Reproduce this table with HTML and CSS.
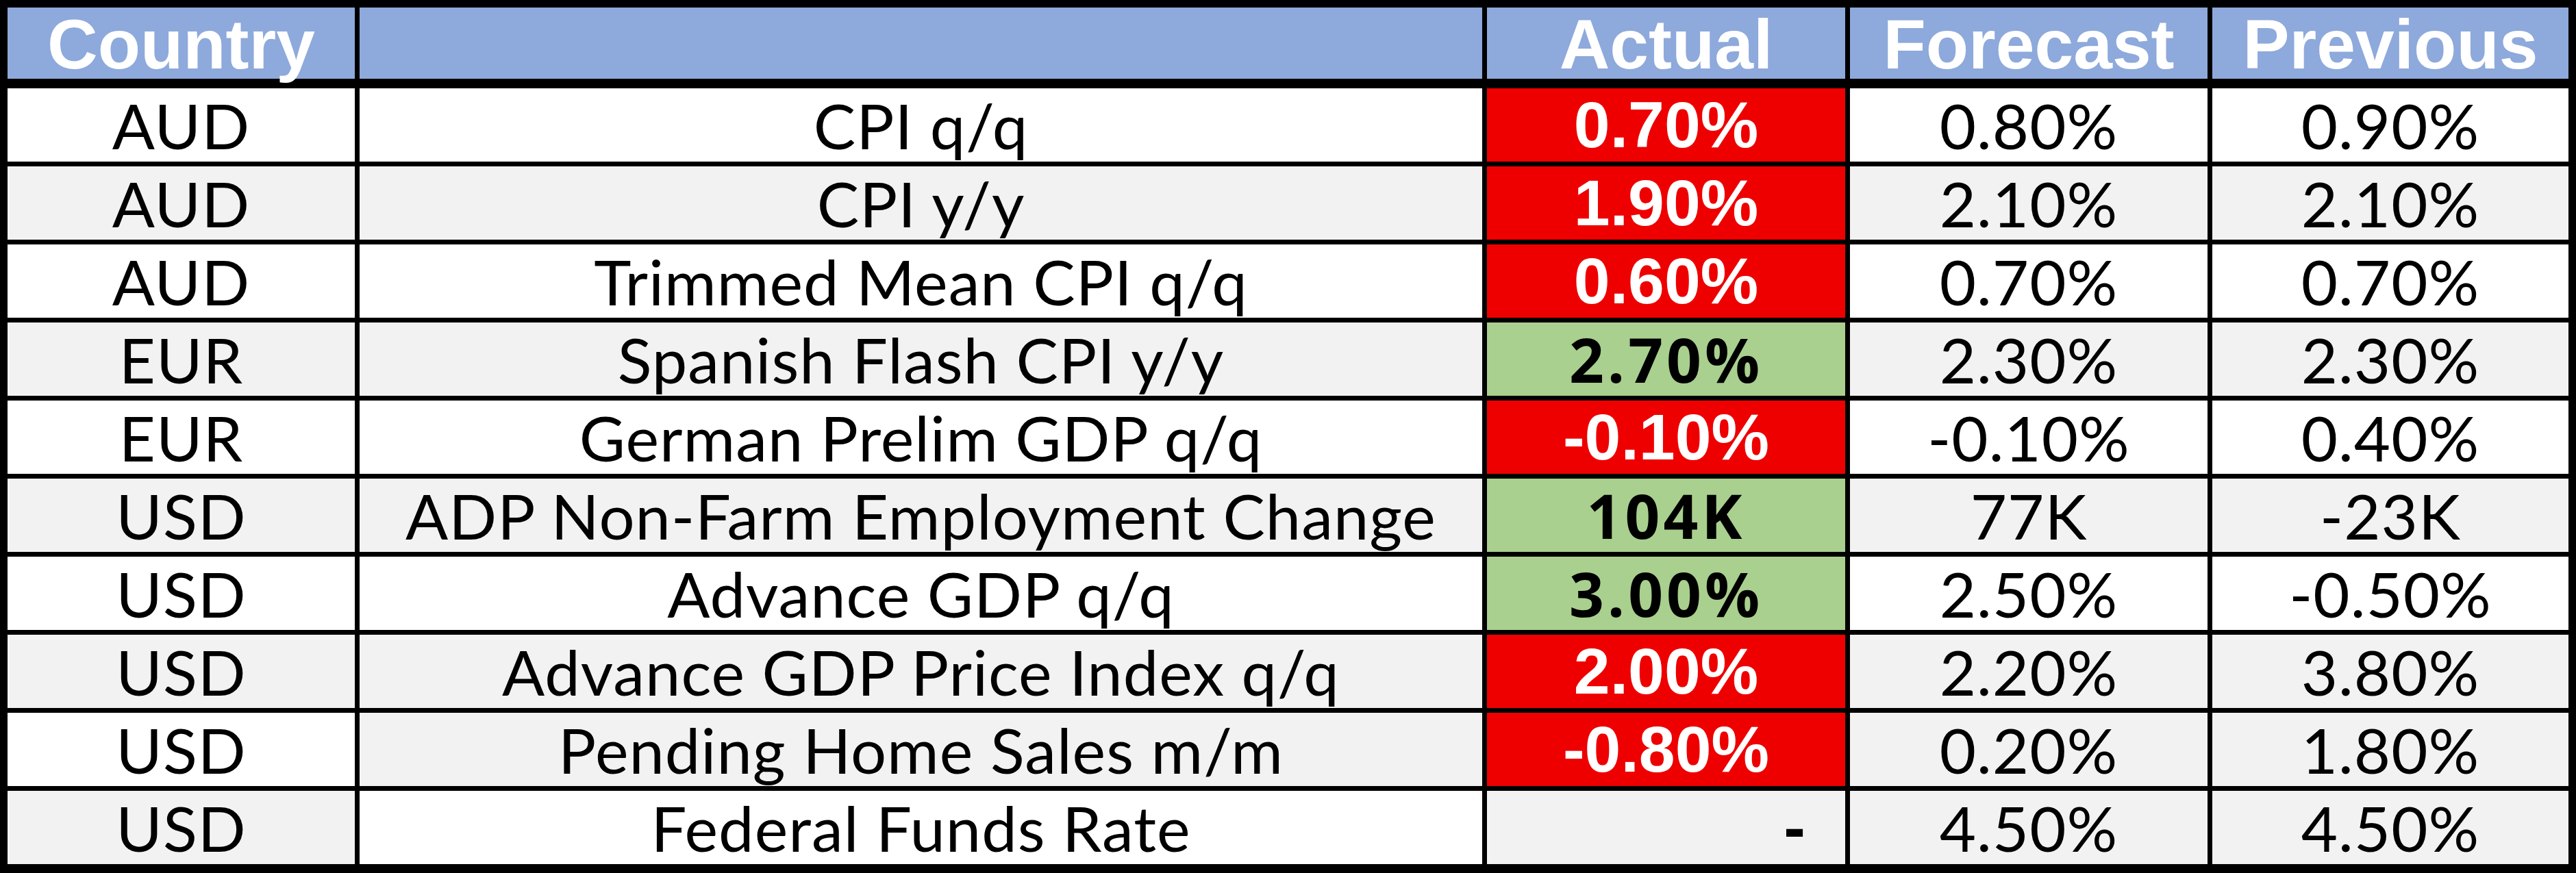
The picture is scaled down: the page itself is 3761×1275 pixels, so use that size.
FILE: index.html
```html
<!DOCTYPE html>
<html lang="en">
<head>
<meta charset="utf-8">
<title>Economic Calendar</title>
<link rel="stylesheet" href="styles.css">
</head>
<body>
<div class="table">
  <div class="row head">
    <div class="cell">Country</div>
    <div class="cell"></div>
    <div class="cell">Actual</div>
    <div class="cell">Forecast</div>
    <div class="cell">Previous</div>
  </div>
  <div class="row">
    <div class="cell">AUD</div>
    <div class="cell">CPI q/q</div>
    <div class="cell act red">0.70%</div>
    <div class="cell">0.80%</div>
    <div class="cell">0.90%</div>
  </div>
  <div class="row">
    <div class="cell alt">AUD</div>
    <div class="cell alt">CPI y/y</div>
    <div class="cell act red">1.90%</div>
    <div class="cell alt">2.10%</div>
    <div class="cell alt">2.10%</div>
  </div>
  <div class="row">
    <div class="cell">AUD</div>
    <div class="cell">Trimmed Mean CPI q/q</div>
    <div class="cell act red">0.60%</div>
    <div class="cell">0.70%</div>
    <div class="cell">0.70%</div>
  </div>
  <div class="row">
    <div class="cell alt">EUR</div>
    <div class="cell alt">Spanish Flash CPI y/y</div>
    <div class="cell act green">2.70%</div>
    <div class="cell alt">2.30%</div>
    <div class="cell alt">2.30%</div>
  </div>
  <div class="row">
    <div class="cell">EUR</div>
    <div class="cell">German Prelim GDP q/q</div>
    <div class="cell act red">-0.10%</div>
    <div class="cell">-0.10%</div>
    <div class="cell">0.40%</div>
  </div>
  <div class="row">
    <div class="cell alt">USD</div>
    <div class="cell alt">ADP Non-Farm Employment Change</div>
    <div class="cell act green">104K</div>
    <div class="cell alt">77K</div>
    <div class="cell alt">-23K</div>
  </div>
  <div class="row">
    <div class="cell">USD</div>
    <div class="cell">Advance GDP q/q</div>
    <div class="cell act green">3.00%</div>
    <div class="cell">2.50%</div>
    <div class="cell">-0.50%</div>
  </div>
  <div class="row">
    <div class="cell alt">USD</div>
    <div class="cell alt">Advance GDP Price Index q/q</div>
    <div class="cell act red">2.00%</div>
    <div class="cell alt">2.20%</div>
    <div class="cell alt">3.80%</div>
  </div>
  <div class="row">
    <div class="cell">USD</div>
    <div class="cell alt">Pending Home Sales m/m</div>
    <div class="cell act red">-0.80%</div>
    <div class="cell alt">0.20%</div>
    <div class="cell alt">1.80%</div>
  </div>
  <div class="row">
    <div class="cell alt">USD</div>
    <div class="cell">Federal Funds Rate</div>
    <div class="cell act dash alt">-</div>
    <div class="cell alt">4.50%</div>
    <div class="cell alt">4.50%</div>
  </div>
</div>
</body>
</html>
```

FILE: styles.css
```css
html, body {
  margin: 0;
  padding: 0;
  background: #000;
}

.table {
  width: 3761px;
  height: 1275px;
  box-sizing: border-box;
  background: #000;
  padding: 11px 11px 13px 11px;
  display: grid;
  grid-template-columns: 507px 1639px 523px 522px 520px;
  grid-template-rows: 111px repeat(10, 107px);
  column-gap: 7px;
  row-gap: 7px;
}

.row {
  display: contents;
}

.cell {
  background: #fff;
  color: #000;
  display: flex;
  align-items: center;
  justify-content: center;
  font-family: "Lato", "Liberation Sans", sans-serif;
  font-weight: 400;
  font-size: 92px;
  letter-spacing: 1px;
  line-height: 1;
  white-space: nowrap;
}

.cell.alt {
  background: #f2f2f2;
}

.head .cell {
  background: #8ea9db;
  color: #fff;
  font-family: "Liberation Sans", Arial, sans-serif;
  font-weight: bold;
  font-size: 102px;
  letter-spacing: 0;
  align-self: start;
  height: 104px;
  padding-top: 4px;
  box-sizing: border-box;
}

.act {
  font-family: "Liberation Sans", Arial, sans-serif;
  font-weight: bold;
  font-size: 95px;
  letter-spacing: 0;
}

.act.red {
  background: #ee0000;
  color: #fff;
}

.act.green {
  background: #a9d08e;
  color: #000;
  font-family: "Open Sans", "Liberation Sans", sans-serif;
  font-size: 89px;
  letter-spacing: 5px;
}

.act.dash {
  justify-content: flex-end;
  padding-right: 58px;
}
```
